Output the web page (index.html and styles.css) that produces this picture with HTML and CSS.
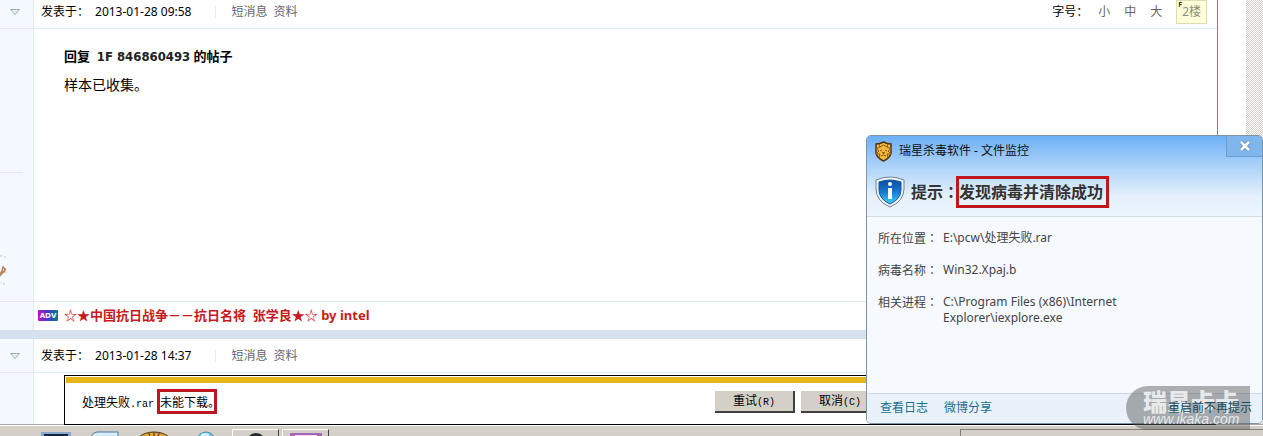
FILE: index.html
```html
<!DOCTYPE html>
<html lang="zh-CN">
<head>
    <meta charset="UTF-8">
    <title>瑞星卡卡</title>
    <link rel="stylesheet" href="styles.css">
</head>
<body>
<div class="screen">
    <div class="browser">
        <div class="thread">
            <div class="post first">
                <div class="side">
                    <div class="side-head">
                        <svg width="10" height="6" viewBox="0 0 10 6"><path d="M.5 .5H9.500L5 5.500Z" fill="#e6edf2" stroke="#9fb0ba"/></svg>
                    </div>
                    <div class="side-rule"></div>
                    <svg class="avatar" width="8" height="32" viewBox="0 0 8 32"><path d="M0 19L2 16L3 12L5 14L4 17L2 18L0 21M3 17L6 14" fill="none" stroke="#b98152" stroke-width="1.5"/><path d="M0 1H2M4 2H6M1 28H2M3 29H5M5 17H7" stroke="#c9c3b8"/></svg>
                </div>
                <div class="main">
                    <div class="head">
                        <span>发表于：</span><span class="date">2013-01-28 09:58</span>
                        <span class="links"><a href="#">短消息</a><a href="#">资料</a></span>
                        <span class="size">字号：</span>
                        <span class="sizes"><a href="#">小</a><a href="#">中</a><a href="#">大</a></span>
                        <a class="floor" href="#"><sup>F</sup>2楼</a>
                    </div>
                    <div class="text">
                        <h4>回复&nbsp; <span>1F 846860493</span> 的帖子</h4>
                        <p>样本已收集。</p>
                    </div>
                </div>
            </div>
            <div class="advert">
                <svg width="20" height="11" viewBox="0 0 20 11">
                    <defs><linearGradient id="adv"><stop offset="0" stop-color="#c010c0"/><stop offset=".5" stop-color="#4038d0"/><stop offset="1" stop-color="#08807c"/></linearGradient></defs>
                    <rect width="20" height="11" rx="1" fill="url(#adv)"/>
                    <text x="10" y="8" text-anchor="middle" class="adv">ADV</text>
                </svg>
                <a href="#">☆★中国抗日战争－－抗日名将&nbsp; 张学良★☆ by intel</a>
            </div>
            <div class="gap"></div>
            <div class="post">
                <div class="side">
                    <div class="side-head">
                        <svg width="10" height="6" viewBox="0 0 10 6"><path d="M.5 .5H9.500L5 5.500Z" fill="#e6edf2" stroke="#9fb0ba"/></svg>
                    </div>
                </div>
                <div class="main">
                    <div class="head">
                        <span>发表于：</span><span class="date">2013-01-28 14:37</span>
                        <span class="links"><a href="#">短消息</a><a href="#">资料</a></span>
                    </div>
                </div>
            </div>
        </div>
        <div class="scrollbar"></div>
    </div>

    <div class="download">
        <p>处理失败<span class="latin">.rar </span><span class="marked">未能下载。</span></p>
        <button>重试<span class="latin">(R)</span></button>
        <button>取消<span class="latin">(C)</span></button>
    </div>

    <div class="taskbar">
        <div class="tasks">
            <svg width="32" height="7" viewBox="0 0 32 7"><rect x="1" y="3" width="30" height="6" fill="#88a9cd"/><rect x="4" y="5" width="24" height="4" fill="#15243e"/></svg>
            <svg width="32" height="7" viewBox="0 0 32 7"><path d="M2 8Q4 3 8 3H29V8" fill="#d8ecf8" stroke="#4d7ba2"/></svg>
            <svg width="32" height="7" viewBox="0 0 32 7"><path d="M1 8Q7 3 16 3T31 8" fill="#e0a33a" stroke="#493313"/><path d="M11 4L12 8M16 3V8M21 4L20 8" stroke="#493313"/></svg>
            <svg width="32" height="7" viewBox="0 0 32 7"><circle cx="19" cy="12" r="9" fill="#6fc7e4" stroke="#3990b5"/><ellipse cx="18" cy="6" rx="4" ry="2" fill="#d5f3fc"/></svg>
        </div>
        <div class="task"><svg width="20" height="6" viewBox="0 0 20 6"><circle cx="10" cy="12" r="10" fill="#272733"/></svg></div>
        <div class="task"><svg width="34" height="6" viewBox="0 0 34 6"><rect x="1" y="2" width="32" height="8" rx="1" fill="#a467b5"/><rect x="6" y="4" width="22" height="4" fill="#efd9ef"/></svg></div>
        <div class="tray"></div>
    </div>

    <div class="popup">
        <div class="top">
            <div class="title">
                <svg width="19" height="21" viewBox="0 0 19 21">
                    <path d="M2 3Q6 3 9.500 1Q13 3 17 3V12Q16 17 9.500 20Q3 17 2 12Z" fill="#f3b83c" stroke="#4c3510" stroke-width="1.500"/>
                    <path d="M5 3L6 6L2 8L5 10L2 13L6 13L5 17M14 3L13 6L17 8L14 10L17 13L13 13L14 17M6 6L9.500 4L13 6M6 10L8 9M13 10L11 9M7 15L9.500 14L12 15" fill="none" stroke="#8a5c14"/>
                    <path d="M8 11H11L10 13H9Z" fill="#7a4c0c"/>
                </svg>
                <span>瑞星杀毒软件 - 文件监控</span>
                <button class="close" aria-label="关闭"><svg width="14" height="12" viewBox="0 0 14 12"><path d="M3 2L11 10M11 2L3 10" stroke="#5a8cba" stroke-width="4.500"/><path d="M3 2L11 10M11 2L3 10" stroke="#fff" stroke-width="2.600"/></svg></button>
            </div>
            <h2>
                <svg width="30" height="32" viewBox="0 0 30 32">
                    <defs><linearGradient id="shield" x2="0" y2="1"><stop offset="0" stop-color="#0c4da0"/><stop offset=".5" stop-color="#167ad0"/><stop offset="1" stop-color="#43d3f5"/></linearGradient></defs>
                    <path d="M1 4Q8 1 15 1Q22 1 29 4V13Q29 25 15 31Q1 25 1 13Z" fill="#eef3f7" stroke="#6e8291"/>
                    <path d="M4 6Q10 4 15 4Q20 4 26 6V14Q26 23 15 28Q4 23 4 14Z" fill="url(#shield)" stroke="#1b529a"/>
                    <circle cx="15" cy="8" r="2" fill="#fff"/><path d="M13 12H17V23H13Z" fill="#fff"/>
                </svg>
                <span>提示<span class="colon" lang="zh-TW">：</span></span><span class="marked">发现病毒并清除成功</span>
            </h2>
        </div>
        <dl>
            <dt>所在位置<span class="colon" lang="zh-TW">：</span></dt><dd>E:\pcw\处理失败.rar</dd>
            <dt>病毒名称<span class="colon" lang="zh-TW">：</span></dt><dd>Win32.Xpaj.b</dd>
            <dt>相关进程<span class="colon" lang="zh-TW">：</span></dt><dd>C:\Program Files (x86)\Internet Explorer\iexplore.exe</dd>
        </dl>
        <div class="foot">
            <a href="#">查看日志</a><a href="#">微博分享</a><a class="never" href="#">重启前不再提示</a>
        </div>
    </div>

    <div class="watermark"><b>瑞星卡卡</b><i>www.ikaka.com</i></div>
</div>
</body>
</html>
```

FILE: styles.css
```css
* { box-sizing: border-box; }
body { margin: 0; background: #fff; color: #000; font: 12px/16px "Noto Sans", "Noto Sans CJK SC", sans-serif; }
a { color: inherit; text-decoration: none; }
h2, h4, p, dl, dd { margin: 0; }
svg { display: block; flex: none; }
button { font: inherit; padding: 0; }

.screen { position: relative; height: 100vh; display: flex; flex-direction: column; overflow: hidden; }
.browser { flex: 1; min-height: 0; display: flex; justify-content: space-between; overflow: hidden; border-bottom: 1px solid #aaa8a4; }
.thread { flex: 1; margin: -5px 28px 0 0; border-right: 1px solid #4f8bb5; }
.scrollbar { width: 17px; background: repeating-conic-gradient(#d4d0c8 0 25%, #fff 0 50%) 0 0 / 2px 2px; }

.post { display: flex; min-height: 100px; }
.post.first { min-height: 306px; }
.side { width: 34px; background: #f3f9fe; border-right: 1px solid #dfeaf0; }
.side-head { height: 34px; padding: 14px 0 0 10px; border-bottom: 1px solid #e0ebf0; }
.side-rule { width: 23px; height: 144px; border-bottom: 1px solid #e0ebf0; }
.avatar { margin-top: 82px; }
.main { flex: 1; }
.head { display: flex; height: 34px; padding: 1px 10px 0 7px; align-items: center; border-bottom: 1px solid #e0ebf0; }
.date { margin-left: 6px; }
.links { display: flex; gap: 6px; margin-left: 24px; padding-left: 15px; border-left: 1px solid #e6eef2; line-height: 12px; color: #666; }
.size { margin-left: auto; }
.sizes { display: flex; gap: 14px; margin: 0 14px 0 0; color: #666; }
.size + .sizes { padding-left: 10px; }
.floor { display: flex; height: 24px; padding: 0 5px 0 1px; line-height: 22px; color: #8d8d75; background: #ffffd9; border: 1px solid #deddb0; }
.floor sup { font: bold 7px/8px "Noto Sans", sans-serif; color: #333; }
.text { padding: 18px 30px; }
.text h4 { font-size: 13px; line-height: 18px; }
.text h4 span { color: #222; font-family: "DejaVu Sans Condensed", "DejaVu Sans", sans-serif; }
.text p { margin-top: 9px; font-size: 14px; line-height: 20px; }

.advert { display: flex; align-items: center; gap: 6px; height: 29px; padding: 0 0 2px 38px; border-top: 1px solid #e0ebf0; background: linear-gradient(90deg, #f3f9fe 33px, #dfeaf0 33px 34px, #fff 34px); color: #c8191c; font-size: 13px; font-weight: bold; }
.adv { font: bold 7px "DejaVu Sans", sans-serif; fill: #fff; }
.gap { height: 9px; background: #d6e0ef; }

.marked { display: inline-block; outline: 3px solid #bd1820; }
.download { position: absolute; left: 64px; right: 47px; bottom: 11px; height: 50px; display: flex; gap: 6px; padding: 3px 6px 0 17px; align-items: center; background: linear-gradient(#e6b31b, #e6b31b) 1px 1px / 100% 6px no-repeat #fff; border: 1px solid #000; font-family: "Noto Sans CJK SC", sans-serif; }
.download p { width: 627px; }
.download .marked { width: 54px; line-height: 19px; white-space: nowrap; }
.download button { width: 80px; height: 22px; background: #d4d0c8; border: solid #404040; border-width: 0 2px 2px 0; }
.latin { font: 10px/12px "Liberation Mono", monospace; white-space: pre; }

.taskbar { display: flex; gap: 3px; height: 11px; padding: 3px 0 0 40px; border-top: 1px solid #fff; background: #d4d0c8; }
.tasks { display: flex; gap: 17px; width: 189px; }
.task { display: flex; justify-content: center; width: 47px; padding-top: 1px; border: solid #fff; border-width: 1px 0 0 1px; border-right: 1px solid #404040; }
.tray { width: 303px; margin-left: auto; border: solid #808080; border-width: 1px 0 0 1px; }

.popup { position: absolute; top: 135px; right: 0; bottom: 12px; width: 397px; display: flex; flex-direction: column; background: #f6fafe; border: 1px solid #7e95a8; border-radius: 5px; color: #444; overflow: hidden; }
.top { height: 81px; background: linear-gradient(#6cb0f7, #a8d0f9 35%, #e4f0fc 75%, #edf5fc); border-bottom: 1px solid #d3dde6; }
.title { display: flex; height: 30px; padding: 0 0 0 7px; gap: 6px; align-items: center; color: #111; }
.close { display: flex; align-items: center; justify-content: center; align-self: flex-start; width: 36px; height: 21px; margin-left: auto; background: #80b6eb; border: solid #6d9fce; border-width: 0 0 1px 1px; }
.popup h2 { display: flex; height: 51px; padding-left: 8px; align-items: center; font-size: 16px; line-height: 26px; color: #333; }
.popup h2 svg { margin-right: 6px; }
.popup h2 .marked { width: 147px; }
/* the TC face centres the full-width colon */
.colon { font-family: "Noto Sans CJK TC", sans-serif; }
.popup dl { flex: 1; display: grid; grid-template-columns: 65px 190px; align-content: start; row-gap: 15px; padding: 13px 0 0 11px; }
.foot { display: flex; gap: 16px; height: 30px; padding: 6px 10px 0 13px; background: #e9f2fb; border-top: 1px solid #ccd9e5; color: #216d8d; }
.never { position: relative; z-index: 1; margin-left: auto; color: #164c63; }

.watermark { position: absolute; right: 13px; bottom: 6px; width: 124px; height: 44px; padding: 6px 0 0 17px; display: flex; flex-direction: column; background: rgba(90, 90, 90, .48); border-radius: 22px 0 0 22px; color: rgba(255, 255, 255, .75); pointer-events: none; }
.watermark b { font-size: 24px; line-height: 20px; font-weight: 900; }
.watermark i { font: italic 14px/14px "Liberation Sans", sans-serif; }
```
